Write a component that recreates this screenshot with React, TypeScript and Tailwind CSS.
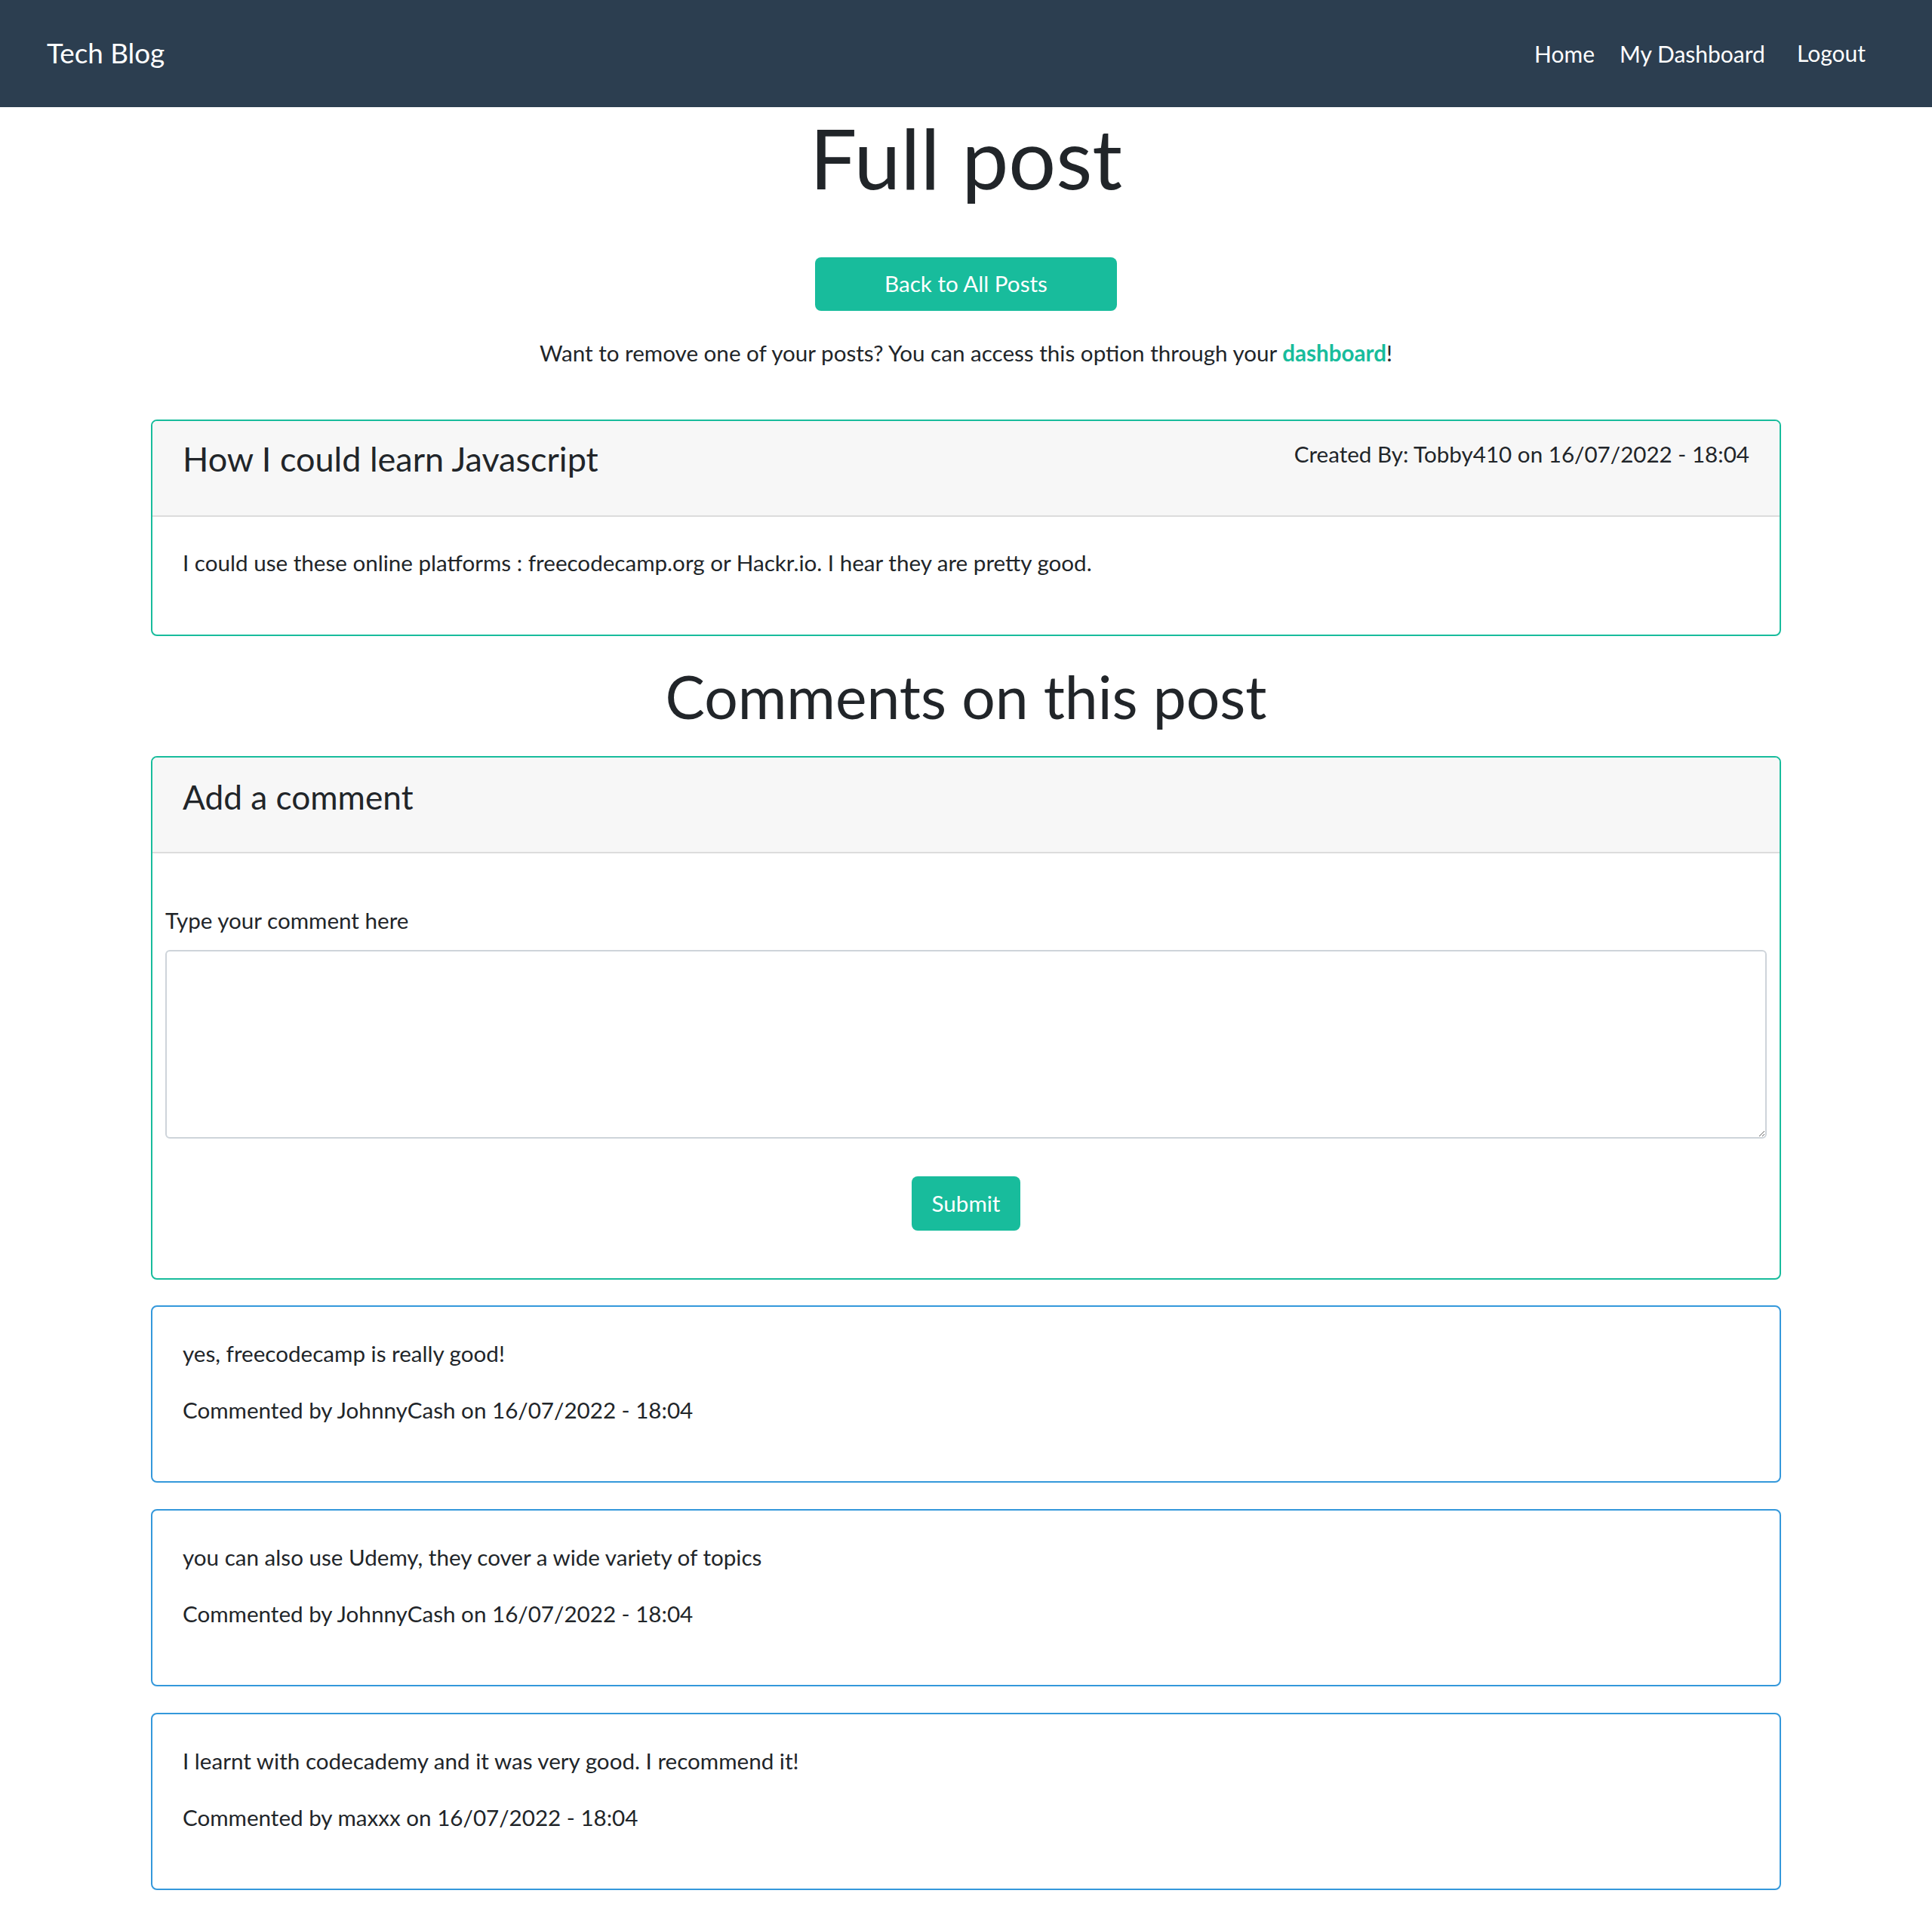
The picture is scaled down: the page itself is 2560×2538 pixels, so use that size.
import React from "react";

const font = { fontFamily: "Lato, 'Noto Sans', sans-serif" };

function CommentCard({ text, by }: { text: string; by: string }) {
  return (
    <div className="border-2 border-[#3498db] rounded-[8px] h-[235px] px-[40px] pt-[43px] text-[29.6px] leading-[38px] text-[#212529]">
      <p>{text}</p>
      <p className="mt-[37px]">{by}</p>
    </div>
  );
}

export default function App() {
  return (
    <div style={font} className="min-h-[2538px] bg-white text-[#212529]">
      <nav className="h-[142px] bg-[#2c3e50] flex items-center justify-between pl-[62px] pr-[88px]">
        <span className="text-white text-[36.8px] leading-none -mt-[2px]">Tech Blog</span>
        <div className="flex items-center text-white text-[30px] leading-none">
          <span>Home</span>
          <span className="ml-[33px]">My Dashboard</span>
          <span className="ml-[42px] -mt-[3px]">Logout</span>
        </div>
      </nav>

      <main className="w-[2160px] mx-auto flex flex-col items-center">
        <h1 className="text-[111px] leading-[132px] font-normal">Full post</h1>
        <button className="mt-[67px] w-[400px] h-[71px] rounded-[8px] bg-[#18bc9c] text-white text-[29.6px]">
          Back to All Posts
        </button>
        <p className="mt-[37px] text-[29.6px] leading-[38px]">
          Want to remove one of your posts? You can access this option through your{" "}
          <span className="text-[#18bc9c] font-bold">dashboard</span>!
        </p>

        <section className="mt-[69px] w-full border-2 border-[#18bc9c] rounded-[8px] overflow-hidden h-[287px] flex flex-col">
          <div className="h-[127px] bg-[#f7f7f7] border-b-2 border-[#dcdcdc] flex items-start justify-between pl-[40px] pr-[40px] pt-[25px]">
            <h3 className="text-[45px] leading-[50px]">How I could learn Javascript</h3>
            <span className="text-[29.6px] leading-[38px] mt-0">
              Created By: Tobby410 on 16/07/2022 - 18:04
            </span>
          </div>
          <div className="pl-[40px] pt-[42px] text-[29.6px] leading-[38px]">
            I could use these online platforms : freecodecamp.org or Hackr.io. I hear they are pretty good.
          </div>
        </section>

        <h2 className="mt-[34px] text-[78.6px] leading-[92px] font-normal">Comments on this post</h2>

        <section className="mt-[33px] w-full border-2 border-[#18bc9c] rounded-[8px] overflow-hidden h-[694px] flex flex-col">
          <div className="h-[127px] bg-[#f7f7f7] border-b-2 border-[#dcdcdc] pl-[40px] pt-[27px]">
            <h3 className="text-[44.2px] leading-[50px]">Add a comment</h3>
          </div>
          <div className="px-[17px] pt-[70px] flex flex-col">
            <label className="text-[29.6px] leading-[38px]">Type your comment here</label>
            <textarea className="mt-[20px] w-full h-[250px] border-2 border-[#ced4da] rounded-[6px] resize-y outline-none" />
            <div className="flex justify-center mt-[50px]">
              <button className="w-[144px] h-[72px] rounded-[8px] bg-[#18bc9c] text-white text-[29.6px]">
                Submit
              </button>
            </div>
          </div>
        </section>

        <div className="mt-[34px] w-full flex flex-col gap-[35px]">
          <CommentCard text="yes, freecodecamp is really good!" by="Commented by JohnnyCash on 16/07/2022 - 18:04" />
          <CommentCard text="you can also use Udemy, they cover a wide variety of topics" by="Commented by JohnnyCash on 16/07/2022 - 18:04" />
          <CommentCard text="I learnt with codecademy and it was very good. I recommend it!" by="Commented by maxxx on 16/07/2022 - 18:04" />
        </div>
      </main>
    </div>
  );
}
